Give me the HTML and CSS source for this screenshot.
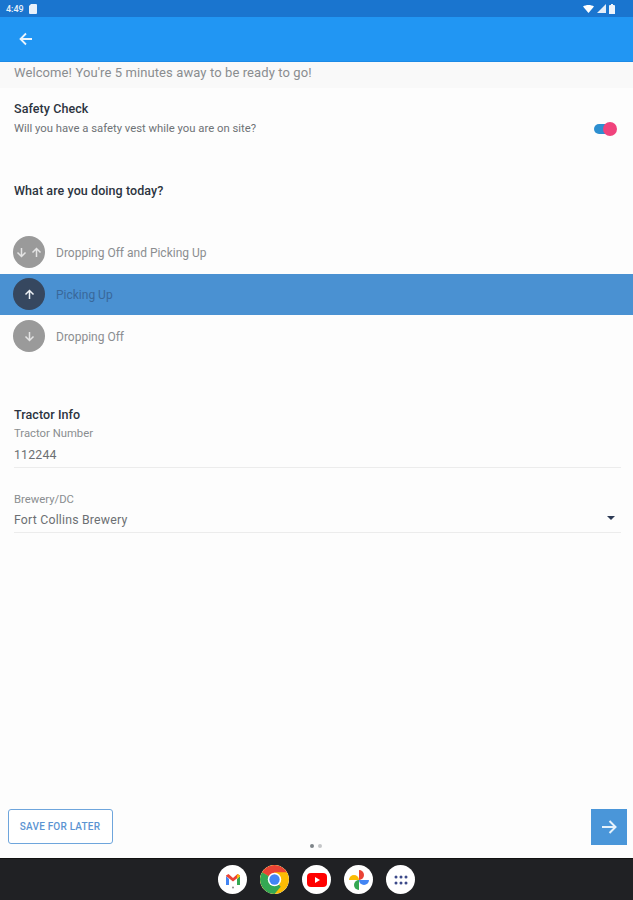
FILE: index.html
```html
<!DOCTYPE html>
<html lang="en">
<head>
<meta charset="utf-8">
<title>Check in</title>
<link rel="stylesheet" href="styles.css">
</head>
<body>
<div class="screen">
  <div class="status">
    <div class="status-left">
      <span class="time">4:49</span>
      <svg class="sd" width="8" height="10" viewBox="0 0 8 10"><path d="M2 0h5a1 1 0 0 1 1 1v8a1 1 0 0 1-1 1H1a1 1 0 0 1-1-1V2z" fill="#e8f1fb"/></svg>
    </div>
    <div class="status-right">
      <svg width="11" height="8" viewBox="0 0 11 8"><path d="M0 1.5C3-.5 8-.5 11 1.5L5.500 8z" fill="#fff"/></svg>
      <svg width="9" height="9" viewBox="0 0 9 9"><path d="M9 0v9H0z" fill="#e4eef9"/></svg>
      <svg width="6" height="10" viewBox="0 0 6 10"><path d="M2 0h2v1h1a1 1 0 0 1 1 1v8H0V2a1 1 0 0 1 1-1h1z" fill="#eef4fb"/></svg>
    </div>
  </div>
  <header class="appbar">
    <svg width="14" height="14" viewBox="0 0 14 14"><path d="M13 7H2M7 1.500 1.500 7 7 12.500" fill="none" stroke="#eaf4fd" stroke-width="1.800"/></svg>
  </header>
  <main class="content">
    <p class="welcome">Welcome! You're 5 minutes away to be ready to go!</p>
    <section class="safety">
      <div>
        <h2 class="heading">Safety Check</h2>
        <p class="question">Will you have a safety vest while you are on site?</p>
      </div>
      <div class="toggle"><span class="track"></span><span class="thumb"></span></div>
    </section>
    <h2 class="heading today">What are you doing today?</h2>
    <ul class="options">
      <li class="option">
        <span class="circle">
          <svg width="11" height="11" viewBox="0 0 11 11"><path d="M5.500 1v8.500M1.500 5.500l4 4 4-4" fill="none" stroke="#e4e4e4" stroke-width="1.500"/></svg>
          <svg width="11" height="11" viewBox="0 0 11 11"><path d="M5.500 10V1.500M1.500 5.500l4-4 4 4" fill="none" stroke="#e4e4e4" stroke-width="1.500"/></svg>
        </span>
        <span class="label">Dropping Off and Picking Up</span>
      </li>
      <li class="option selected">
        <span class="circle">
          <svg width="11" height="11" viewBox="0 0 11 11"><path d="M5.500 10V1.500M1.500 5.500l4-4 4 4" fill="none" stroke="#eef2f6" stroke-width="1.500"/></svg>
        </span>
        <span class="label">Picking Up</span>
      </li>
      <li class="option">
        <span class="circle">
          <svg width="11" height="11" viewBox="0 0 11 11"><path d="M5.500 1v8.500M1.500 5.500l4 4 4-4" fill="none" stroke="#e4e4e4" stroke-width="1.500"/></svg>
        </span>
        <span class="label">Dropping Off</span>
      </li>
    </ul>
    <section class="tractor">
      <h2 class="heading">Tractor Info</h2>
      <div class="field">
        <span class="field-label">Tractor Number</span>
        <span class="field-value">112244</span>
      </div>
      <div class="field second">
        <span class="field-label">Brewery/DC</span>
        <div class="select">
          <span class="field-value">Fort Collins Brewery</span>
          <span class="caret"></span>
        </div>
      </div>
    </section>
    <div class="footer">
      <button class="later">SAVE FOR LATER</button>
      <div class="dots"><span class="dot on"></span><span class="dot"></span></div>
      <button class="next" aria-label="Next">
        <svg width="16" height="16" viewBox="0 0 16 16"><path d="M1 8h13M8.500 2 14.500 8 8.500 14" fill="none" stroke="#e6f2fb" stroke-width="2"/></svg>
      </button>
    </div>
  </main>
  <nav class="navbar">
    <span class="app">
      <svg width="20" height="20" viewBox="0 0 20 20"><path d="M3 6v9h3V9z" fill="#4285f4"/><path d="M17 6v9h-3V9z" fill="#34a853"/><path d="M3 6 10 11.500 17 6v-.5L14.500 4 10 8 5.500 4 3 5.500z" fill="#ea4335"/><path d="M14 9l3-3V5.500L14.500 4 14 6z" fill="#fbbc04"/><circle cx="10" cy="17.500" r="1" fill="#888"/></svg>
    </span>
    <span class="app chrome">
      <svg width="29" height="29" viewBox="0 0 28 28"><circle cx="14" cy="14" r="14" fill="#fbbc04"/><path d="M14 14 1.900 7A14 14 0 0 1 26.100 7H14z" fill="#ea4335"/><path d="M14 14 1.900 7A14 14 0 0 0 10 27.400L14 14z" fill="#34a853"/><path d="M14 14 7 26.100A14 14 0 0 0 14 28l6-7z" fill="#34a853"/><circle cx="14" cy="14" r="6.500" fill="#fff"/><circle cx="14" cy="14" r="5" fill="#4285f4"/></svg>
    </span>
    <span class="app">
      <svg width="20" height="14" viewBox="0 0 20 14"><rect width="20" height="14" rx="4" fill="#f00"/><path d="M8 4v6l5-3z" fill="#fff"/></svg>
    </span>
    <span class="app">
      <svg width="22" height="22" viewBox="0 0 22 22"><path d="M11 11V1a5 5 0 0 1 0 10z" fill="#ea4335"/><path d="M11 11h10a5 5 0 0 1-10 0z" fill="#4285f4"/><path d="M11 11v10a5 5 0 0 1 0-10z" fill="#34a853"/><path d="M11 11H1a5 5 0 0 1 10 0z" fill="#fbbc04"/></svg>
    </span>
    <span class="app">
      <svg width="14" height="10" viewBox="0 0 14 10" fill="#3c4a8a"><circle cx="2" cy="2" r="1.500"/><circle cx="7" cy="2" r="1.500"/><circle cx="12" cy="2" r="1.500"/><circle cx="2" cy="8" r="1.500"/><circle cx="7" cy="8" r="1.500"/><circle cx="12" cy="8" r="1.500"/></svg>
    </span>
  </nav>
</div>
</body>
</html>
```
FILE: styles.css
```css
* { box-sizing: border-box; }
html, body { margin: 0; padding: 0; }
body { font-family: Roboto, "Liberation Sans", sans-serif; background: #fdfdfd; }
h2, p, ul { margin: 0; padding: 0; }
.screen { width: 633px; height: 900px; display: flex; flex-direction: column; overflow: hidden; }
.status { height: 17px; flex: none; background: #1a75cf; display: flex; justify-content: space-between; align-items: center; padding: 0 18px 0 6px; color: #e8f1fb; }
.status-left, .status-right { display: flex; align-items: center; gap: 3px; }
.status-left { gap: 5px; }
.time { font-size: 9px; font-weight: 500; }
.appbar { height: 45px; flex: none; background: #2196f3; border-bottom: 1px solid #1c8ae6; display: flex; align-items: center; padding: 0 0 1px 19px; }
.content { flex: 1; display: flex; flex-direction: column; min-height: 0; }
.welcome { font-size: 13px; line-height: 22px; padding: 0 14px; height: 26px; color: #8a8d90; background: #f9f9f9; letter-spacing: 0.100px; }
.heading { font-size: 12.500px; line-height: 16px; font-weight: 500; color: #2c3440; letter-spacing: 0.080px; }
.safety { display: flex; justify-content: space-between; align-items: flex-start; padding: 13px 16px 0 14px; height: 76px; }
.question { font-size: 11.300px; line-height: 14px; margin-top: 5px; color: #6e7276; }
.toggle { position: relative; width: 24px; height: 14px; margin-top: 21px; }
.track { position: absolute; left: 1px; top: 2px; width: 20px; height: 10px; border-radius: 5px; background: #2d8fd0; }
.thumb { position: absolute; right: 0; top: 0; width: 14px; height: 14px; border-radius: 50%; background: #f0437c; }
.today { padding: 0 14px; margin-top: 19px; }
.options { list-style: none; margin-top: 33px; }
.option { height: 42px; display: flex; align-items: center; padding-left: 13px; }
.option.selected { background: linear-gradient(#4a91d2 41px, transparent 41px); }
.circle { width: 32px; height: 32px; flex: none; border-radius: 50%; background: #9a9a9a; display: flex; align-items: center; justify-content: center; gap: 4px; margin-bottom: 2px; }
.selected .circle { background: #36475f; }
.label { font-size: 12px; color: #8b8d90; margin-left: 11px; }
.selected .label { color: #39689a; }
.tractor { margin-top: 49px; padding: 0 12px 0 14px; }
.field { display: flex; flex-direction: column; border-bottom: 1px solid #ececec; height: 41px; margin-top: 4px; }
.field.second { margin-top: 25px; height: 40px; }
.field-label { font-size: 11.300px; line-height: 14px; color: #8a8d90; }
.field-value { font-size: 12.300px; line-height: 24px; margin-top: 2px; color: #6c6f73; letter-spacing: 0.200px; }
.select { display: flex; justify-content: space-between; align-items: center; padding-right: 6px; }
.select .field-value { margin-top: 1px; }
.caret { width: 0; height: 0; margin-bottom: 3px; border-left: 4px solid transparent; border-right: 4px solid transparent; border-top: 4px solid #2c3a55; }
.footer { margin-top: auto; height: 49px; display: flex; align-items: flex-start; position: relative; padding: 0 6px 0 8px; justify-content: space-between; }
.later { width: 105px; height: 35px; border: 1px solid #6ea5dc; border-radius: 3px; background: #fff; color: #5b94d2; font: 500 10px Roboto, sans-serif; letter-spacing: 0.200px; padding: 0 1px 0 0; }
.next { width: 36px; height: 36px; border: 0; background: #4a96d9; display: flex; align-items: center; justify-content: center; padding: 0; }
.dots { position: absolute; left: 310px; top: 35px; display: flex; gap: 4px; }
.dot { width: 4px; height: 4px; border-radius: 50%; background: #c4c6c8; }
.dot.on { background: #7d8388; }
.navbar { height: 42px; flex: none; background: #202124; border-top: 1px solid #111; display: flex; align-items: center; justify-content: center; gap: 13px; }
.app { width: 29px; height: 29px; border-radius: 50%; background: #fff; display: flex; align-items: center; justify-content: center; overflow: hidden; }
```
